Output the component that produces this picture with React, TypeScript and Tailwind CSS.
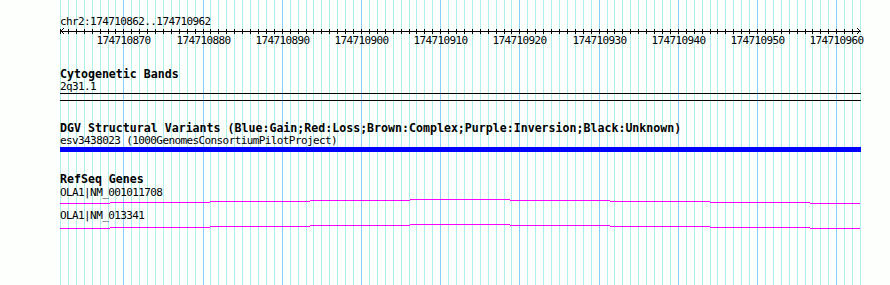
import React from "react";

const N = 101;
const gx = (i: number) => Math.round(60 + (i * 800) / N);
const START = 174710862;

function Grid() {
  const lines = [];
  for (let i = 0; i <= N; i++) {
    const major = (START + i) % 10 === 0;
    lines.push(
      <rect key={i} x={gx(i)} y={0} width={1} height={285} fill={major ? "#87cefa" : "#afeeee"} />
    );
  }
  return (
    <svg className="absolute inset-0" width={890} height={285} shapeRendering="crispEdges">
      {lines}
    </svg>
  );
}

function Ruler() {
  const ticks = [];
  const labels = [];
  for (let i = 0; i <= 100; i++) {
    ticks.push(<rect key={i} x={gx(i)} y={1} width={1} height={5} fill="#000" />);
    if ((START + i) % 10 === 0) {
      labels.push(
        <text key={"l" + i} x={gx(i) + 0.5} y={16} textAnchor="middle" fontSize={11} letterSpacing={-0.6} fontFamily="'DejaVu Sans Mono', monospace" fill="#000">
          {START + i}
        </text>
      );
    }
  }
  return (
    <svg width={890} height={20} className="block -ml-[60px]" shapeRendering="crispEdges">
      <rect x={60} y={3} width={801} height={1} fill="#000" />
      {ticks}
      <polyline points="64,0 61,3 64,6" fill="none" stroke="#000" strokeWidth={1} />
      <polyline points="857,0 860,3 857,6" fill="none" stroke="#000" strokeWidth={1} />
      {labels}
    </svg>
  );
}

function Intron() {
  const segs: [number, number, number][] = [
    [60, 110, 4],
    [110, 210, 3],
    [210, 310, 2],
    [310, 410, 1],
    [410, 510, 0],
    [510, 610, 1],
    [610, 710, 2],
    [710, 810, 3],
    [810, 860, 4],
  ];
  return (
    <svg width={890} height={5} className="block -ml-[60px]" shapeRendering="crispEdges">
      {segs.map(([a, b, y], k) => (
        <rect key={k} x={a} y={y} width={b - a} height={1} fill="#ff00ff" />
      ))}
    </svg>
  );
}

const small = "h-[13px] text-[11px] leading-[13px] tracking-[-0.6px] whitespace-pre text-black";
const bold = "h-[12px] text-[11.6px] leading-[12px] font-bold whitespace-pre text-black";

export default function App() {
  return (
    <div className="relative w-[890px] h-[285px] overflow-hidden bg-[#fcfffc] font-['DejaVu_Sans_Mono',monospace]">
      <Grid />
      <div className="relative flex flex-col pl-[60px]">
        <div className="h-[15px]" />
        <div className={small}>chr2:174710862..174710962</div>
        <Ruler />
        <div className="h-[20px]" />
        <div className={bold}>Cytogenetic Bands</div>
        <div className={small}>2q31.1</div>
        <div className="w-[801px] h-px bg-black" />
        <div className="w-[801px] h-px bg-black mt-[6px]" />
        <div className="h-[21px]" />
        <div className={bold}>DGV Structural Variants (Blue:Gain;Red:Loss;Brown:Complex;Purple:Inversion;Black:Unknown)</div>
        <div className={small}>esv3438023 (1000GenomesConsortiumPilotProject)</div>
        <div className="w-[801px] h-[5px] bg-[#0000ff]" />
        <div className="h-[21px]" />
        <div className="h-[13px] text-[11.6px] leading-[13px] font-bold whitespace-pre text-black">RefSeq Genes</div>
        <div className={small}>OLA1|NM_001011708</div>
        <Intron />
        <div className="h-[5px]" />
        <div className={small}>OLA1|NM_013341</div>
        <div className="h-[2px]" />
        <Intron />
      </div>
    </div>
  );
}
